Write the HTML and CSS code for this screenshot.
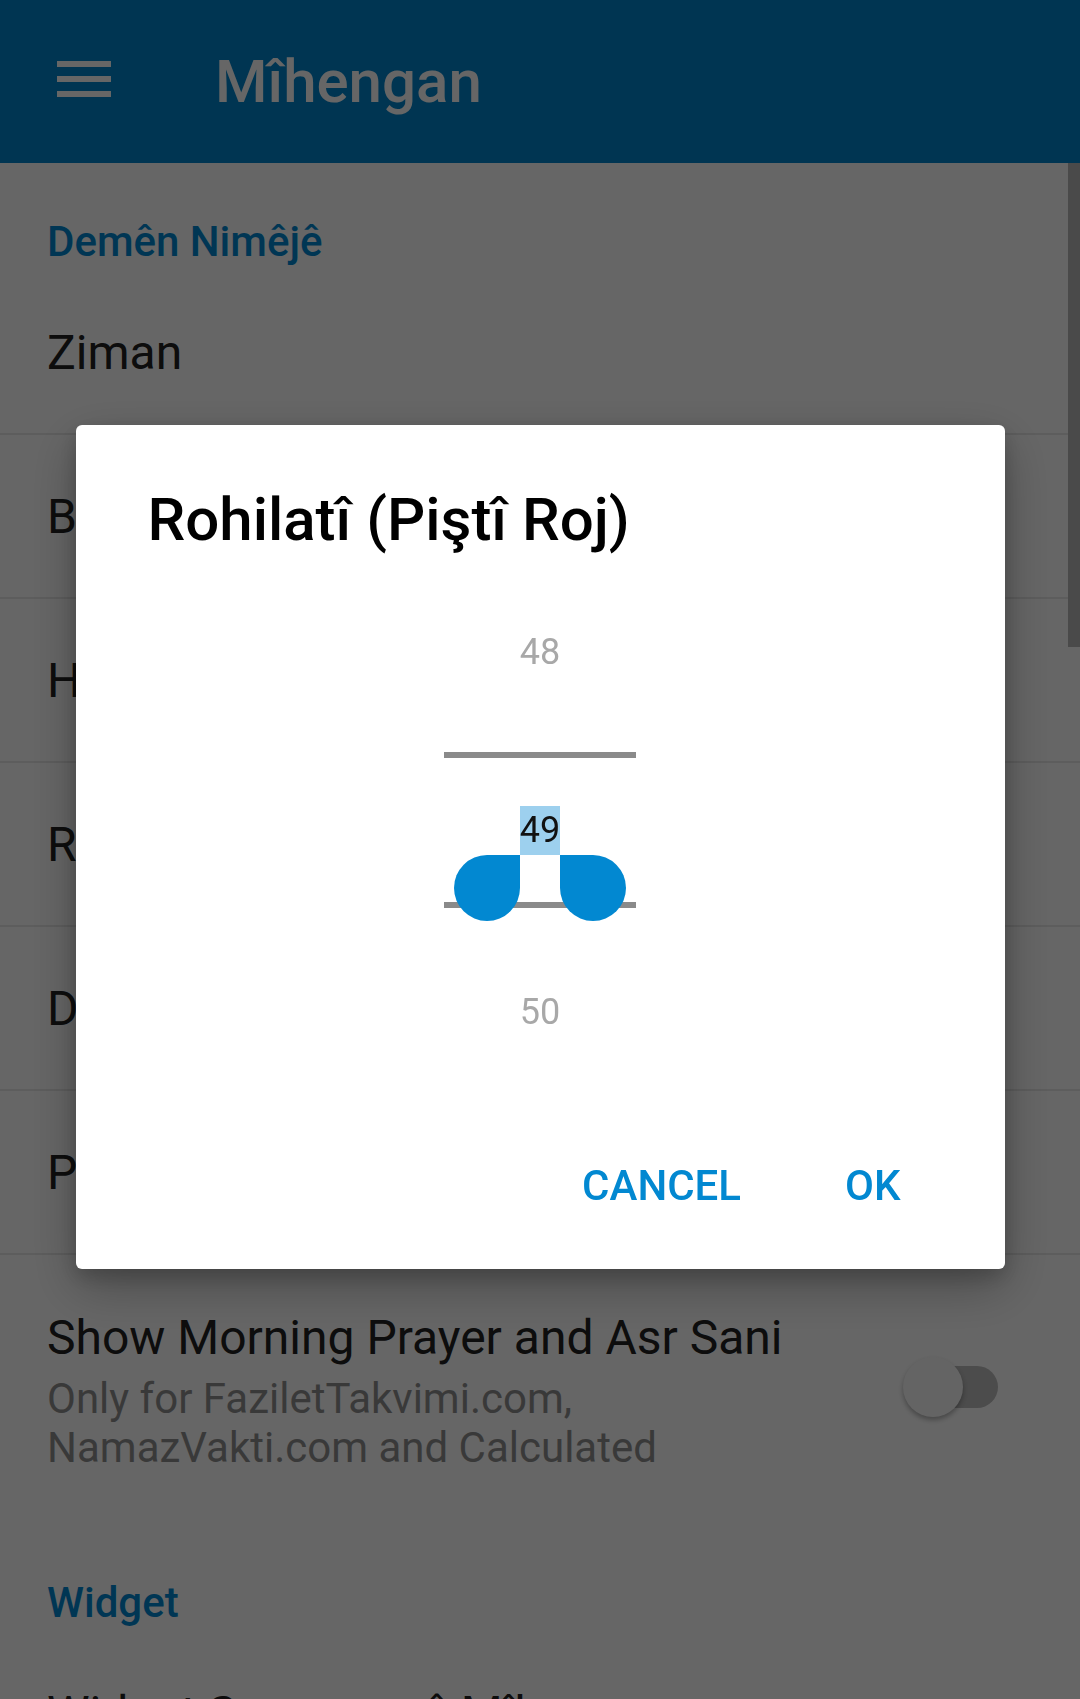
FILE: index.html
```html
<!DOCTYPE html>
<html lang="ku">
<head>
<meta charset="utf-8">
<title>Mîhengan</title>
<link rel="stylesheet" href="styles.css">
</head>
<body>
<div class="app">
  <header class="toolbar">
    <button class="nav-btn" aria-label="Menu">
      <svg width="54" height="36" viewBox="0 0 54 36" aria-hidden="true">
        <rect x="0" y="0" width="54" height="6"/>
        <rect x="0" y="15" width="54" height="6"/>
        <rect x="0" y="30" width="54" height="6"/>
      </svg>
    </button>
    <h1 class="toolbar-title">Mîhengan</h1>
  </header>
  <main class="prefs">
    <div class="scrollbar"></div>
    <h2 class="category">Demên Nimêjê</h2>
    <div class="pref"><span class="pref-title">Ziman</span></div>
    <div class="pref"><span class="pref-title">Bang</span></div>
    <div class="pref"><span class="pref-title">Hesab</span></div>
    <div class="pref"><span class="pref-title">Rohilatî</span></div>
    <div class="pref"><span class="pref-title">Dem</span></div>
    <div class="pref"><span class="pref-title">Peyam</span></div>
    <div class="pref pref-switch">
      <div class="pref-text">
        <div class="pref-title">Show Morning Prayer and Asr Sani</div>
        <div class="pref-summary">Only for FaziletTakvimi.com, NamazVakti.com and Calculated</div>
      </div>
      <span class="switch"><span class="track"></span><span class="thumb"></span></span>
    </div>
    <h2 class="category">Widget</h2>
    <div class="pref"><span class="pref-title">Widget Serencamê Mîhengan</span></div>
  </main>
</div>
<div class="scrim">
  <div class="dialog" role="dialog">
    <h3 class="dialog-title">Rohilatî (Piştî Roj)</h3>
    <div class="picker">
      <div class="np-item dim">48</div>
      <div class="np-item sel"><span class="np-sel-text">49<span class="handle left"></span><span class="handle right"></span></span></div>
      <div class="np-item dim">50</div>
    </div>
    <div class="actions">
      <button class="btn">CANCEL</button>
      <button class="btn">OK</button>
    </div>
  </div>
</div>
</body>
</html>
```

FILE: styles.css
```css
* { box-sizing: border-box; }
html, body {
  margin: 0;
  padding: 0;
  background: #ffffff;
  font-family: Roboto, "Noto Sans", "Liberation Sans", sans-serif;
}
body { overflow: hidden; }

.app {
  width: 1080px;
  height: 1699px;
  overflow: hidden;
  background: #ffffff;
}

/* Toolbar */
.toolbar {
  height: 163px;
  background: #0285cc;
  display: flex;
  align-items: center;
}
.nav-btn {
  margin: 0 0 5px 57px;
  padding: 0;
  border: 0;
  background: none;
  width: 54px;
  height: 36px;
  display: block;
}
.nav-btn svg { display: block; fill: #ffffff; }
.toolbar-title {
  margin: 0 0 0 104px;
  font-size: 60px;
  font-weight: 500;
  line-height: 70px;
  color: #ffffff;
}

/* Preference list */
.prefs { position: relative; }
.scrollbar {
  position: absolute;
  right: 0;
  top: 0;
  width: 12px;
  height: 484px;
  background: #b9b9b9;
}
.category {
  margin: 0;
  height: 108px;
  padding: 54px 0 0 47px;
  font-size: 42px;
  font-weight: 500;
  line-height: 50px;
  color: #0288d1;
}
.pref {
  height: 164px;
  padding: 2px 82px 0 47px;
  display: flex;
  align-items: center;
  border-bottom: 2px solid #e8e8e8;
}
.pref-title {
  font-size: 48px;
  line-height: 56px;
  color: #212121;
  white-space: nowrap;
}
.pref-switch {
  height: 269px;
  padding: 55px 82px 52px 47px;
  border-bottom: 0;
  gap: 80px;
}
.pref-text { flex: 1; min-width: 0; }
.pref-summary {
  margin-top: 8px;
  font-size: 42px;
  line-height: 49px;
  color: #909090;
}

/* Switch */
.switch {
  position: relative;
  flex: none;
  width: 102px;
  height: 60px;
  margin-bottom: 8px;
}
.track {
  position: absolute;
  left: 10px;
  top: 9px;
  width: 92px;
  height: 42px;
  border-radius: 21px;
  background: #bdbdbd;
}
.thumb {
  position: absolute;
  left: 7px;
  top: 0;
  width: 60px;
  height: 60px;
  border-radius: 50%;
  background: #fafafa;
  box-shadow: 0 3px 5px rgba(0, 0, 0, 0.3);
}

/* Dialog */
.scrim {
  position: fixed;
  inset: 0;
  background: rgba(0, 0, 0, 0.6);
  display: flex;
  justify-content: center;
  align-items: flex-start;
  padding-top: 425px;
}
.dialog {
  width: 929px;
  background: #ffffff;
  border-radius: 6px;
  padding: 60px 0 58px;
  box-shadow: 0 18px 50px rgba(0, 0, 0, 0.28), 0 8px 20px rgba(0, 0, 0, 0.18);
}
.dialog-title {
  margin: 0;
  padding: 0 72px;
  font-size: 60px;
  font-weight: 500;
  line-height: 70px;
  color: #000000;
}
.picker {
  width: 192px;
  margin: 7px auto 0;
}
.np-item {
  height: 180px;
  display: flex;
  align-items: center;
  justify-content: center;
  font-size: 36px;
  line-height: 49px;
}
.np-item.dim { color: #a8a8a8; }
.np-item.sel {
  height: 156px;
  margin: 10px 0 14px;
  border-top: 6px solid #8a8a8a;
  border-bottom: 6px solid #8a8a8a;
}
.np-sel-text {
  position: relative;
  display: inline-block;
  height: 49px;
  line-height: 49px;
  background: #9dd0ee;
  color: #111111;
}
.handle {
  position: absolute;
  top: 100%;
  width: 66px;
  height: 66px;
  background: #0288d1;
}
.handle.left {
  right: 100%;
  border-radius: 50% 0 50% 50%;
}
.handle.right {
  left: 100%;
  border-radius: 0 50% 50% 50%;
}
.actions {
  margin-top: 59px;
  display: flex;
  justify-content: flex-end;
  gap: 104px;
  padding-right: 104px;
}
.btn {
  margin: 0;
  padding: 0;
  border: 0;
  background: none;
  font-family: Roboto, "Noto Sans", "Liberation Sans", sans-serif;
  font-size: 42px;
  font-weight: 500;
  line-height: 50px;
  color: #0288d1;
}
```
